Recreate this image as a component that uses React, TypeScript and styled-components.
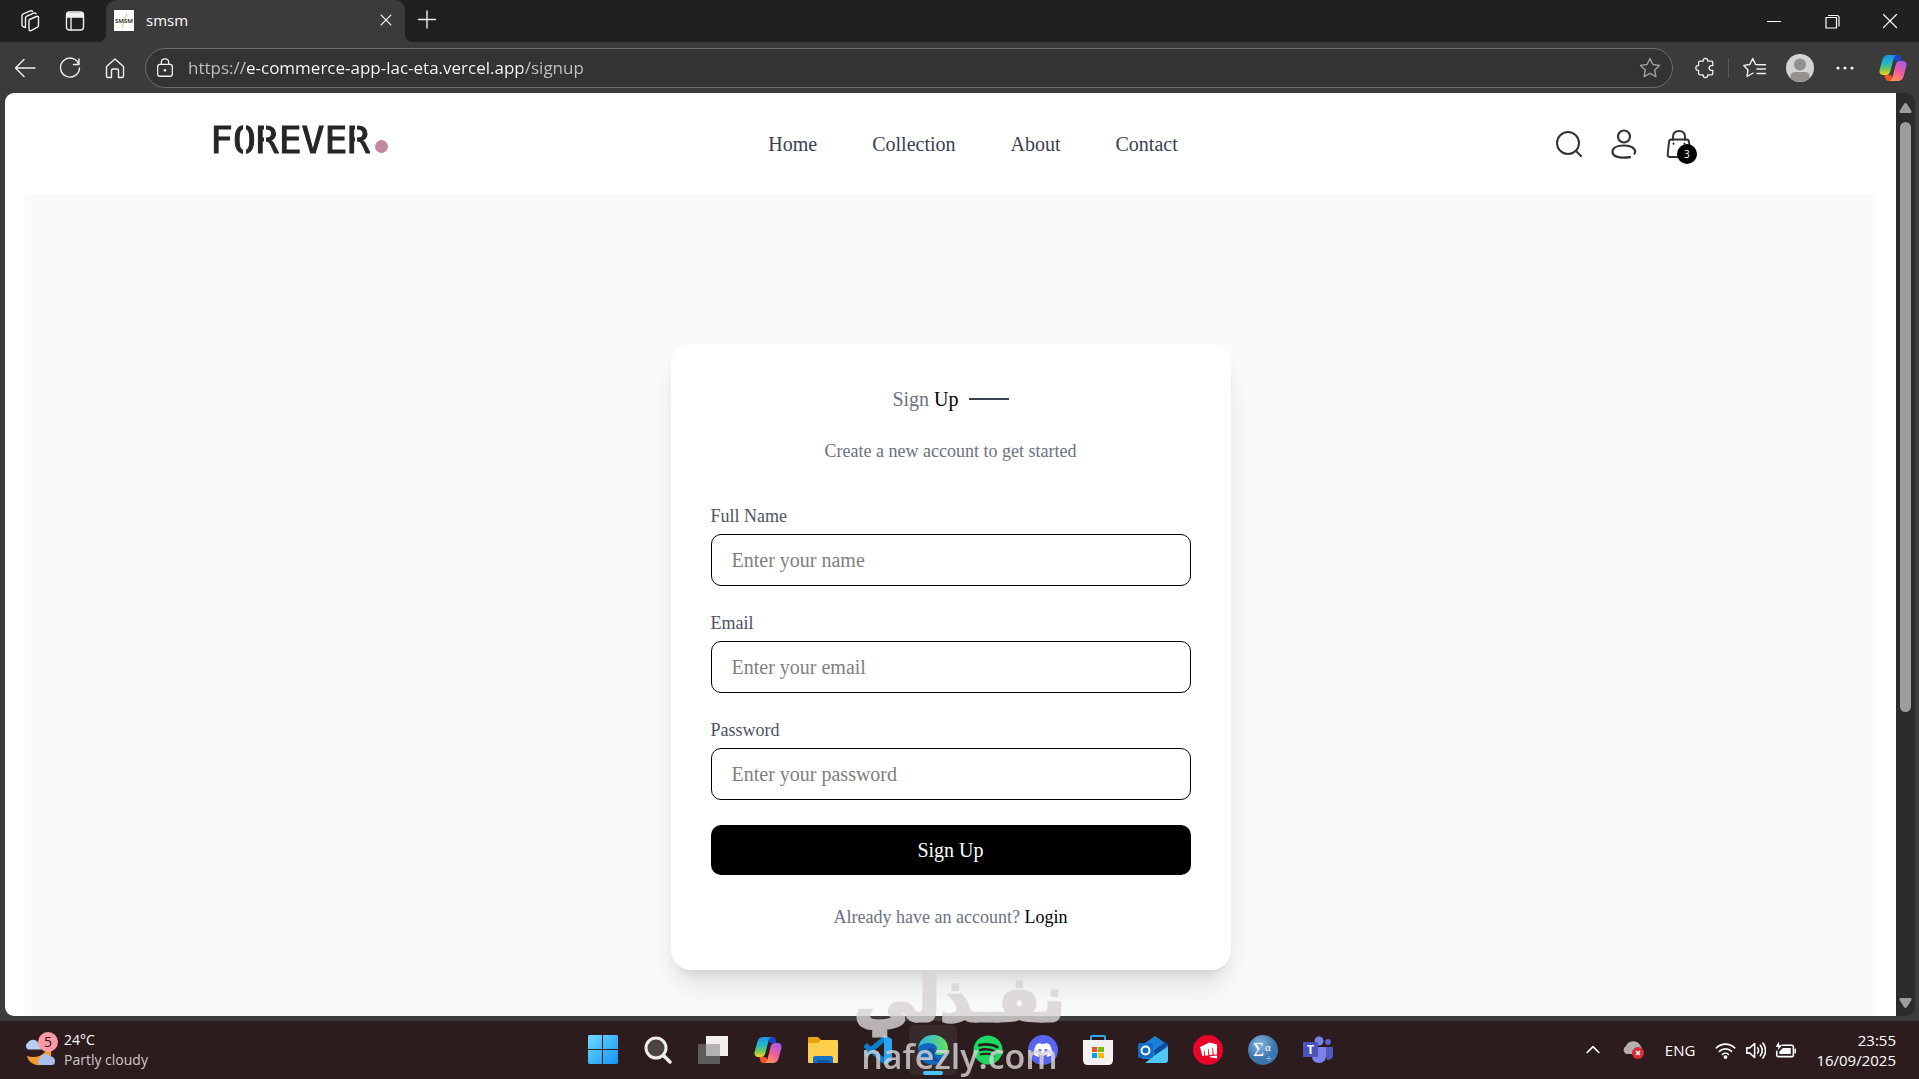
import React from 'react';
import styled, { createGlobalStyle } from 'styled-components';
import { FaDiscord, FaSpotify } from 'react-icons/fa';
import { SiRiotgames } from 'react-icons/si';

const serif = `'Liberation Serif', 'Times New Roman', serif`;
const ui = `'Open Sans', 'Noto Sans', sans-serif`;

const GlobalStyle = createGlobalStyle`
  *, *::before, *::after { box-sizing: border-box; }
  body { margin: 0; background: #3b3b3b; }
  button { border: 0; padding: 0; background: none; color: inherit; font: inherit; cursor: pointer; }
  a { color: inherit; text-decoration: none; }
  h1, p { margin: 0; font-weight: 400; }
  svg { display: block; }
`;

const Desktop = styled.div`
  display: flex;
  flex-direction: column;
  height: 100vh;
  overflow: hidden;
  font-family: ${ui};
  color: #fff;
`;

/* Browser window */
const TabStrip = styled.header`
  display: flex;
  height: 42px;
  background: #202020;
`;
const StripTools = styled.div`
  display: flex;
  align-items: center;
  gap: 9px;
  padding: 0 13px 0 12px;
`;
const IconButton = styled.button`
  display: grid;
  place-items: center;
  flex: none;
  width: 36px;
  height: 36px;
  color: #f0f0f0;
`;
const Tab = styled.div`
  position: relative;
  display: flex;
  align-items: center;
  gap: 12px;
  width: 299px;
  padding: 0 1px 2px 8px;
  border-radius: 10px 10px 0 0;
  background: #3b3b3b;
  font-size: 15px;
  &::before, &::after {
    content: '';
    position: absolute;
    bottom: 0;
    width: 8px;
    height: 8px;
  }
  &::before { left: -8px; background: radial-gradient(circle at 0 0, transparent 8px, #3b3b3b 8px); }
  &::after { right: -8px; background: radial-gradient(circle at 100% 0, transparent 8px, #3b3b3b 8px); }
`;
const TabTitle = styled.span`
  flex: 1;
`;
const NewTab = styled(IconButton)`
  height: 40px;
  margin: 0 auto 0 4px;
`;
const WindowButton = styled.button`
  display: grid;
  place-items: center;
  width: 58px;
  height: 42px;
`;

const Toolbar = styled.div`
  display: flex;
  align-items: center;
  height: 51px;
  padding: 0 8px 0 7px;
  background: #3b3b3b;
`;
const ToolGroup = styled.div`
  display: flex;
  align-items: center;
  gap: 9px;
`;
const AddressBar = styled.form`
  display: flex;
  align-items: center;
  flex: 1;
  height: 40px;
  margin: 0 14px 0 12px;
  padding: 0 4px 0 1px;
  border: 1px solid #6c6c6c;
  border-radius: 20px;
  background: #333;
`;
const AddressInput = styled.input`
  flex: 1;
  min-width: 0;
  height: 36px;
  padding: 0 0 0 5px;
  border: 0;
  outline: 0;
  background: linear-gradient(90deg, #c4c4c4 62px, #fff 62px 340px, #c4c4c4 340px) text;
  color: transparent;
  font-family: ${ui};
  font-size: 17px;
`;
const FavoriteButton = styled(IconButton)`
  color: #a0a0a0;
`;
const ToolDivider = styled.span`
  width: 1px;
  height: 20px;
  margin: 0 8px 0 5px;
  background: #5a5a5a;
`;
const CopilotButton = styled(IconButton)`
  margin-left: 12px;
`;

const Viewport = styled.div`
  display: flex;
  flex: 1;
  min-height: 0;
  padding: 0 4px 0 5px;
`;
const Page = styled.div`
  flex: 1;
  overflow: hidden;
  padding: 0 20px;
  border-radius: 9px 0 0 9px;
  background: #fff;
  font-family: ${serif};
`;
const Scrollbar = styled.div`
  display: flex;
  flex-direction: column;
  align-items: center;
  width: 19px;
  padding: 10px 0 8px;
  border-radius: 0 9px 9px 0;
  background: #2b2b2b;
`;
const Track = styled.div`
  flex: 1;
  margin: 9px 0;
`;
const Thumb = styled.div`
  width: 11px;
  height: 68%;
  border-radius: 6px;
  background: #9d9d9d;
`;

/* Shop site */
const SiteHeader = styled.div`
  display: flex;
  align-items: center;
  justify-content: space-between;
  height: 101px;
  padding: 0 10%;
`;
const Brand = styled.a`
  display: flex;
  align-items: baseline;
  width: 180px;
  padding-bottom: 7px;
  color: #262626;
  font-family: 'DejaVu Sans Mono', monospace;
  font-size: 38px;
  line-height: 46px;
`;
/* Thin vertical cuts give the wordmark its stencil look */
const BrandName = styled.span`
  -webkit-text-stroke: 1px #262626;
  mask-image: linear-gradient(
    90deg,
    #000 33px, transparent 33px 36px, #000 36px 54px, transparent 54px 56px,
    #000 56px 145px, transparent 145px 147px, #000 147px
  );
`;
const BrandDot = styled.span`
  flex: none;
  width: 13px;
  height: 13px;
  margin-left: 5px;
  border-radius: 50%;
  background: #c586a0;
`;
const SiteNav = styled.nav`
  display: flex;
  gap: 55px;
  padding-top: 1px;
  color: #374151;
  font-size: 20px;
  line-height: 30px;
`;
const SiteActions = styled.div`
  display: flex;
  gap: 30px;
`;
const SiteButton = styled.button`
  position: relative;
  display: grid;
  place-items: center;
  width: 25px;
  height: 30px;
  color: #333;
`;
const CartCount = styled.span`
  position: absolute;
  right: -6px;
  bottom: -5px;
  width: 20px;
  height: 20px;
  border-radius: 50%;
  background: #000;
  color: #fff;
  font: 10px/20px ${ui};
  text-align: center;
`;
const SignupSection = styled.main`
  display: flex;
  justify-content: center;
  align-items: flex-start;
  min-height: 100vh;
  padding: 150px 20px;
  background: #f9fafb;
`;
const Card = styled.section`
  width: 100%;
  max-width: 560px;
  padding: 40px;
  border-radius: 20px;
  background: #fff;
  box-shadow: 0 20px 30px -5px rgba(0, 0, 0, 0.1), 0 8px 12px -6px rgba(0, 0, 0, 0.12);
  text-align: center;
`;
const CardTitle = styled.h1`
  display: flex;
  align-items: center;
  justify-content: center;
  gap: 10px;
  color: #6b7280;
  font-size: 20px;
  line-height: 30px;
  b { color: #000; font-weight: 400; }
  &::after { content: ''; width: 40px; height: 2px; background: #374151; }
`;
const Note = styled.p<{ $top: number }>`
  margin-top: ${(p) => p.$top}px;
  color: #6b7280;
  font-size: 18px;
  line-height: 25px;
  a { color: #000; }
`;
const Form = styled.form`
  display: grid;
  gap: 25px;
  margin-top: 40px;
`;
const Field = styled.div`
  display: grid;
  gap: 5px;
  text-align: left;
`;
const FieldLabel = styled.label`
  color: #4b5563;
  font-size: 18px;
  line-height: 25px;
`;
const FieldInput = styled.input`
  width: 100%;
  height: 52px;
  padding: 0 20px;
  border: 1px solid #000;
  border-radius: 10px;
  background: #fff;
  font-family: ${serif};
  font-size: 20px;
  &::placeholder { color: #808080; }
`;
const Submit = styled.button`
  height: 50px;
  border-radius: 10px;
  background: #000;
  color: #fff;
  font-size: 20px;
`;

/* Desktop taskbar */
const Taskbar = styled.footer`
  display: grid;
  grid-template-columns: 1fr auto 1fr;
  align-items: center;
  height: 58px;
  margin-top: 5px;
  background: #2c1c1d;
  font-size: 15px;
  line-height: 20px;
`;
const Weather = styled.button`
  display: flex;
  align-items: center;
  gap: 6px;
  justify-self: start;
  padding-left: 24px;
  font-size: 14px;
  text-align: left;
  span { display: block; color: #d0c8c8; }
  span:first-child { color: #fff; }
`;
const Apps = styled.div`
  display: flex;
  gap: 7px;
  padding-left: 2px;
`;
const AppButton = styled.button<{ $active?: boolean }>`
  position: relative;
  display: grid;
  place-items: center;
  width: 48px;
  height: 50px;
  border-radius: 5px;
  background: ${(p) => (p.$active ? '#382a2b' : 'transparent')};
  &::after {
    content: '';
    display: ${(p) => (p.$active ? 'block' : 'none')};
    position: absolute;
    left: 14px;
    bottom: 0;
    width: 20px;
    height: 4px;
    border-radius: 2px;
    background: #4cc2ff;
  }
`;
const RoundLogo = styled.span<{ $bg: string }>`
  display: grid;
  place-items: center;
  width: 30px;
  height: 30px;
  border-radius: 50%;
  background: ${(p) => p.$bg};
  color: #fff;
`;
const Tray = styled.div`
  display: flex;
  align-items: center;
  justify-self: end;
  gap: 20px;
  padding-right: 23px;
`;
const QuickSettings = styled.button`
  display: flex;
  gap: 9px;
`;
const Clock = styled.button`
  text-align: right;
  span { display: block; }
`;

const Watermark = styled.div`
  position: fixed;
  left: 50%;
  bottom: 0;
  transform: translateX(-50%);
  display: flex;
  flex-direction: column;
  align-items: center;
  color: #d8d4d4;
  opacity: 0.82;
  pointer-events: none;
`;
const WatermarkArabic = styled.span`
  font-family: 'DejaVu Sans', sans-serif;
  font-size: 62px;
  font-weight: 700;
  line-height: 66px;
  -webkit-text-stroke: 3px #d8d4d4;
`;
const WatermarkLatin = styled.span`
  font-family: 'Open Sans', sans-serif;
  font-size: 34px;
  font-weight: 600;
  line-height: 46px;
`;

type IconProps = { size?: number; width?: number; children: React.ReactNode };
const Line = ({ size = 24, width = 1.4, children }: IconProps) => (
  <svg width={size} height={size} viewBox="0 0 24 24" fill="none" stroke="currentColor" strokeWidth={width} strokeLinecap="round" strokeLinejoin="round" aria-hidden="true">
    {children}
  </svg>
);

const CopilotLogo = ({ id }: { id: string }) => (
  <svg width="28" height="28" viewBox="0 0 28 28" aria-hidden="true">
    <defs>
      <linearGradient id={`${id}a`} x1="0" y1="0" x2="0" y2="1">
        <stop offset="0" stopColor="#1b8fe8" /><stop offset=".4" stopColor="#22b8c9" /><stop offset=".7" stopColor="#6cc75a" /><stop offset="1" stopColor="#f5d51c" />
      </linearGradient>
      <linearGradient id={`${id}b`} x1=".8" y1="0" x2=".2" y2="1">
        <stop offset="0" stopColor="#a35be8" /><stop offset=".5" stopColor="#ee5c9c" /><stop offset="1" stopColor="#ff9b4a" />
      </linearGradient>
    </defs>
    <path d="M15 1h3.500c2 0 2.800 1.200 3.300 3l.9 3H17l-2-1z" fill="#1746c8" />
    <path d="M13 27H9.500c-2 0-2.800-1.200-3.300-3l-.9-3H11l2 1z" fill="#f0532d" />
    <path d="M9 1h9c-1.900 0-2.800 1.500-3.400 3.400L11.400 17c-.7 2.400-2 4-4.400 4H4.300C1.200 21-.2 18.500.7 15.400L3.500 5.500C4.400 2.600 6 1 9 1z" fill={`url(#${id}a)`} />
    <path d="M19 27h-9c1.900 0 2.800-1.500 3.400-3.400L16.600 11c.7-2.400 2-4 4.400-4h2.700c3.100 0 4.500 2.500 3.600 5.600l-2.800 9.900C23.600 25.400 22 27 19 27z" fill={`url(#${id}b)`} />
  </svg>
);

const Favicon = () => (
  <svg width="20" height="21" viewBox="0 0 20 21" aria-hidden="true">
    <path fill="#fff" d="M0 0h20v21H0z" />
    <path d="M13 3 8 18" stroke="#d8c98a" />
    <text x="10" y="13" fontSize="6" fontWeight="700" textAnchor="middle" fill="#444" fontFamily="Open Sans, sans-serif">SMSM</text>
  </svg>
);

const WeatherIcon = () => (
  <svg width="34" height="36" viewBox="0 0 34 36" aria-hidden="true">
    <path d="M3 24a12 11 0 0 0 24-4c0-3-1-6-3-8 0 8-9 16-21 12z" fill="#f09a2c" />
    <path d="M4 17.500a4 4 0 0 1 0-7 6 6 0 0 1 10 0q3 1 3 7z" fill="#b9cdf3" />
    <path d="M16 33a4 4 0 0 1 0-7 6 6 0 0 1 10-2q5 1 5 5 0 4-3 4z" fill="#a9c0ef" />
    <circle cx="24" cy="10" r="10" fill="#fd9aa5" />
    <text x="24" y="15" fontSize="14" textAnchor="middle" fill="#301517" fontFamily="Open Sans, sans-serif">5</text>
  </svg>
);

const apps: { name: string; active?: boolean; icon: React.ReactNode }[] = [
  { name: 'Start', icon: (
    <svg width="30" height="30" viewBox="0 0 30 30"><defs><linearGradient id="win" x1="0" y1="0" x2="1" y2="1"><stop stopColor="#6fdcff" /><stop offset="1" stopColor="#1392f5" /></linearGradient></defs>
      <path fill="url(#win)" d="M1 0h13v14H0V1zM15 0h14l1 1v13H15zM0 15h14v14H1l-1-1zM15 15h15v13l-1 1H15z" /></svg>
  ) },
  { name: 'Search', icon: (
    <svg width="30" height="30" viewBox="0 0 30 30"><circle cx="13" cy="13" r="10" fill="#4c4344" stroke="#eee" strokeWidth="3" /><path d="m21 21 6 6" stroke="#eee" strokeWidth="3.500" strokeLinecap="round" /></svg>
  ) },
  { name: 'Task view', icon: (
    <svg width="30" height="30" viewBox="0 0 30 30"><path fill="#f1eff0" d="M8 1h22v20H8z" /><path fill="#666" d="M0 9h22v20H0z" opacity=".85" /><path fill="#b5b2b3" d="M8 9h14v12H8z" /></svg>
  ) },
  { name: 'Copilot', icon: <CopilotLogo id="tb" /> },
  { name: 'File Explorer', icon: (
    <svg width="30" height="30" viewBox="0 0 30 30"><path fill="#e5a50f" d="M0 3q0-1 1-1h9l3 3h5v6H0z" /><path fill="#fecf4c" d="M0 8h10l3-3h16q1 0 1 1v21q0 1-1 1H1q-1 0-1-1z" /><path fill="#1272c4" d="M5 28v-5q0-2 2-2h16q2 0 2 2v5z" /><path fill="#0c569e" d="M9 25h12v3H9z" /></svg>
  ) },
  { name: 'Visual Studio Code', icon: (
    <svg width="30" height="30" viewBox="0 0 30 30"><path d="M2 10 22 27M2 20 22 3" stroke="#0a7fd0" strokeWidth="5" /><path fill="#2aa4f0" d="m21 0 8 4v22l-8 4z" /></svg>
  ) },
  { name: 'Microsoft Edge', active: true, icon: (
    <svg width="30" height="30" viewBox="0 0 30 30"><defs><linearGradient id="edge"><stop stopColor="#2ab5e8" /><stop offset="1" stopColor="#68df5c" /></linearGradient></defs>
      <circle cx="15" cy="15" r="15" fill="#1069bd" />
      <path fill="url(#edge)" d="M0 14C1 5 7 0 15 0c9 0 15 6 15 13 0 5-4 7-8 7-4 0-5-1-5-2s2-1 2-4-3-6-8-6S1 10 0 14z" />
      <path fill="#154e9c" d="M10 15c-2 7 4 12 10 12 3 0 5-1 7-2-8 1-13-4-10-9-2-4-6-4-7-1z" /></svg>
  ) },
  { name: 'Spotify', icon: <FaSpotify size={30} color="#1ed760" /> },
  { name: 'Discord', icon: <RoundLogo $bg="#5865f2"><FaDiscord size={20} /></RoundLogo> },
  { name: 'Microsoft Store', icon: (
    <svg width="30" height="30" viewBox="0 0 30 30"><path d="M8 6V2q0-1 1-1h12q1 0 1 1v4" fill="none" stroke="#33a7ec" strokeWidth="2" /><path fill="#f3f1f1" d="M0 5h30v20q0 5-5 5H5q-5 0-5-5z" /><path fill="#f25022" d="M9 12h5v5H9z" /><path fill="#7fba00" d="M15 12h6v5h-6z" /><path fill="#00a4ef" d="M9 18h5v5H9z" /><path fill="#ffb900" d="M15 18h6v5h-6z" /></svg>
  ) },
  { name: 'Outlook', icon: (
    <svg width="30" height="28" viewBox="0 0 30 28"><path fill="#1a82d8" d="M4 9 17 0l13 9v14H4z" /><path fill="#0e4a99" d="m16 14 12-8 2 3-13 11z" /><path fill="#51c6f3" d="M30 11v13q0 3-3 3H7l13-10z" /><rect y="7" width="15" height="15" rx="2" fill="#0f6cbf" /><circle cx="7.500" cy="14.500" r="4" fill="none" stroke="#fff" strokeWidth="2" /></svg>
  ) },
  { name: 'Riot Client', icon: <RoundLogo $bg="#e90429"><SiRiotgames size={17} /></RoundLogo> },
  { name: 'Math Input', icon: (
    <svg width="30" height="30" viewBox="0 0 30 30"><defs><radialGradient id="math" cx=".4" cy=".3"><stop stopColor="#86b4dc" /><stop offset="1" stopColor="#3d75ad" /></radialGradient></defs>
      <circle cx="15" cy="15" r="15" fill="url(#math)" /><g fill="#fff" fontFamily="Liberation Serif, serif"><text x="5" y="21" fontSize="19">Σ</text><text x="17" y="16" fontSize="11">α</text><text x="18" y="27" fontSize="10">÷</text></g></svg>
  ) },
  { name: 'Microsoft Teams', icon: (
    <svg width="30" height="28" viewBox="0 0 30 28"><circle cx="25" cy="6" r="3" fill="#5b62c8" /><path fill="#5059c0" d="M20 11h10v8q0 5-6 5z" /><circle cx="16" cy="5" r="4.500" fill="#7b83eb" /><path fill="#7b83eb" d="M9 11h14v9q0 7-7 7t-7-7z" /><rect y="6" width="15" height="15" rx="1" fill="#4b53bc" /><text x="7.500" y="18" fontSize="12" fontWeight="700" textAnchor="middle" fill="#fff" fontFamily="Open Sans, sans-serif">T</text></svg>
  ) },
];

const fields = [
  { id: 'name', label: 'Full Name', type: 'text', hint: 'Enter your name' },
  { id: 'email', label: 'Email', type: 'email', hint: 'Enter your email' },
  { id: 'password', label: 'Password', type: 'password', hint: 'Enter your password' },
];

const links = ['Home', 'Collection', 'About', 'Contact'];

function BrowserChrome() {
  return (
    <>
      <TabStrip>
        <StripTools>
          <IconButton aria-label="Workspaces">
            <Line><path d="M11.500 10.500 18.500 7.500q2-.7 2 1.200v7.600q0 1.200-1 1.800l-6 3.300q-2.500 1-2.500-1.200v-8.500q0-.9.500-1.200zM7.500 18.500v-9.500q0-1.300 1.300-1.900l7-3q1.700-.6 2.200.7M4 16V6.800q0-1.300 1.300-1.900l7-3q1.700-.6 2.200.7M7.500 18.500Q4 18 4 16" /></Line>
          </IconButton>
          <IconButton aria-label="Tab actions">
            <Line><rect x="3.500" y="3" width="17" height="18" rx="3" /><path d="M4 4.500h16V8H4z" fill="currentColor" /><path d="M8 8v13" /></Line>
          </IconButton>
        </StripTools>
        <Tab>
          <Favicon />
          <TabTitle>smsm</TabTitle>
          <IconButton aria-label="Close tab"><Line size={18} width={1.8}><path d="m5.500 5.500 13 13M18.500 5.500l-13 13" /></Line></IconButton>
        </Tab>
        <NewTab aria-label="New tab"><Line><path d="M12 3v17M3.500 11.500h17" /></Line></NewTab>
        <WindowButton aria-label="Minimize"><Line width={1.2}><path d="M5.500 12.500h13" /></Line></WindowButton>
        <WindowButton aria-label="Restore"><Line width={1.2}><path d="M6 8.500h10.500V19H6zM8.500 6.500h8.500q2 0 2 2V17" /></Line></WindowButton>
        <WindowButton aria-label="Close"><Line width={1.2}><path d="m5.500 5.500 13 13M18.500 5.500l-13 13" /></Line></WindowButton>
      </TabStrip>
      <Toolbar>
        <ToolGroup>
          <IconButton aria-label="Back"><Line><path d="M22 12H3M11 3.500 2.500 12l8.500 8.500" /></Line></IconButton>
          <IconButton aria-label="Reload"><Line><path d="M21 8.500A9.500 9.500 0 1 0 21.500 12M21 3v5.500h-5.500" /></Line></IconButton>
          <IconButton aria-label="Home page"><Line><path d="M3.500 10.500 12 3l8.500 7.500V20q0 1.500-1.500 1.500h-3.500v-7q0-1.500-1.500-1.500h-4q-1.500 0-1.500 1.500v7H5q-1.500 0-1.500-1.500z" /></Line></IconButton>
        </ToolGroup>
        <AddressBar onSubmit={(e) => e.preventDefault()}>
          <IconButton type="button" aria-label="Site information"><Line size={22}><rect x="4" y="8" width="16" height="13" rx="2.500" /><path d="M8 8V5.500q0-3.500 4-3.500t4 3.500V8" /><circle cx="12" cy="14.500" r=".8" fill="currentColor" /></Line></IconButton>
          <AddressInput aria-label="Address" defaultValue="https://e-commerce-app-lac-eta.vercel.app/signup" />
          <FavoriteButton type="button" aria-label="Add to favorites"><Line><path d="m12 2.500 2.900 6 6.600.9-4.800 4.600 1.200 6.600-5.900-3.200-5.900 3.200 1.200-6.600L2.500 9.400l6.600-.9z" /></Line></FavoriteButton>
        </AddressBar>
        <IconButton aria-label="Extensions"><Line size={22}><path d="M10 4.500V4a2.500 2.500 0 0 1 5 0v.5h4q1.500 0 1.500 1.500v3.500H19a2.500 2.500 0 0 0 0 5h1.500V18q0 1.500-1.500 1.500h-4v.5a2.500 2.500 0 0 1-5 0v-.5H6.500Q5 19.500 5 18v-3.500h-.5a2.500 2.500 0 0 1 0-5H5V6q0-1.500 1.500-1.500z" /></Line></IconButton>
        <ToolDivider />
        <ToolGroup>
          <IconButton aria-label="Favorites"><Line><path d="M7.500 18.500 4 20.500l1-6.600L.8 9.400l6-.9 2.900-6 2.900 6 9.900.2M14 13h8.500M14 17.500h8.500M10 17l-2.500 1.500" /></Line></IconButton>
          <IconButton aria-label="Profile">
            <svg width="28" height="28" viewBox="0 0 28 28"><circle cx="14" cy="14" r="14" fill="#d5d3d1" /><circle cx="14" cy="10.500" r="6" fill="#93908d" /><path fill="#93908d" d="M4.500 24Q4 18 9 18h10q5 0 4.500 6a14 14 0 0 1-19 0z" /></svg>
          </IconButton>
          <IconButton aria-label="Settings and more"><Line><g fill="currentColor" stroke="none"><circle cx="5" cy="12" r="1.600" /><circle cx="12" cy="12" r="1.600" /><circle cx="19" cy="12" r="1.600" /></g></Line></IconButton>
        </ToolGroup>
        <CopilotButton aria-label="Copilot"><CopilotLogo id="nav" /></CopilotButton>
      </Toolbar>
    </>
  );
}

function SignupPage() {
  return (
    <Page>
      <SiteHeader>
        <Brand href="#"><BrandName>FOREVER</BrandName><BrandDot /></Brand>
        <SiteNav>{links.map((l) => <a key={l} href="#">{l}</a>)}</SiteNav>
        <SiteActions>
          <SiteButton aria-label="Search products">
            <svg width="26" height="26" viewBox="0 0 26 26" fill="none" stroke="currentColor" strokeWidth="2" strokeLinecap="round"><circle cx="12" cy="12" r="11" /><path d="m20 20 5 5" /></svg>
          </SiteButton>
          <SiteButton aria-label="Account">
            <svg width="26" height="30" viewBox="0 0 26 30" fill="none" stroke="currentColor" strokeWidth="2.200" strokeLinecap="round"><circle cx="13" cy="7.500" r="6" /><path d="M23.500 24.500c2-3-1-8-10.500-8-8 0-11.500 3-11.500 6.300C1.500 27 5 28.700 13 28.700q3.500 0 6-.5" /></svg>
          </SiteButton>
          <SiteButton aria-label="Cart">
            <svg width="26" height="30" viewBox="0 0 26 30" fill="none" stroke="currentColor" strokeWidth="2" strokeLinecap="round"><path d="M7 11V8q0-6 6-6t6 6v3" /><path d="M12 28H4q-2.500 0-2.300-2.500L3 13q.2-2.500 2.500-2.500h15q2.300 0 2.500 2.500l.8 7" /><path d="M7.500 14.500v.2M18.500 14.500v.2" /></svg>
            <CartCount>3</CartCount>
          </SiteButton>
        </SiteActions>
      </SiteHeader>
      <SignupSection>
        <Card>
          <CardTitle><span>Sign <b>Up</b></span></CardTitle>
          <Note $top={25}>Create a new account to get started</Note>
          <Form onSubmit={(e) => e.preventDefault()}>
            {fields.map((f) => (
              <Field key={f.id}>
                <FieldLabel htmlFor={f.id}>{f.label}</FieldLabel>
                <FieldInput id={f.id} type={f.type} placeholder={f.hint} />
              </Field>
            ))}
            <Submit type="submit">Sign Up</Submit>
          </Form>
          <Note $top={30}>Already have an account? <a href="#">Login</a></Note>
        </Card>
      </SignupSection>
    </Page>
  );
}

export default function App() {
  return (
    <Desktop>
      <GlobalStyle />
      <BrowserChrome />
      <Viewport>
        <SignupPage />
        <Scrollbar>
          <svg width="13" height="10" viewBox="0 0 13 10"><path d="M6.500 0q1 0 1.500 1l4.500 7q.5 2-1 2h-10q-1.500 0-1-2L5 1q.5-1 1.500-1z" fill="#9d9d9d" /></svg>
          <Track><Thumb /></Track>
          <svg width="13" height="10" viewBox="0 0 13 10"><path d="M6.500 10q1 0 1.500-1l4.500-7q.5-2-1-2h-10Q0 0 .5 2L5 9q.5 1 1.500 1z" fill="#9d9d9d" /></svg>
        </Scrollbar>
      </Viewport>
      <Taskbar>
        <Weather>
          <WeatherIcon />
          <div><span>24°C</span><span>Partly cloudy</span></div>
        </Weather>
        <Apps>
          {apps.map((a) => <AppButton key={a.name} aria-label={a.name} $active={a.active}>{a.icon}</AppButton>)}
        </Apps>
        <Tray>
          <button aria-label="Show hidden icons"><Line size={20} width={2}><path d="m5 15 7-7 7 7" /></Line></button>
          <button aria-label="Cloud sync error">
            <svg width="22" height="20" viewBox="0 0 22 20"><path d="M3 14a4.500 4.500 0 0 1 0-8 8 8 0 0 1 14-1q3 3 1 9z" fill="#b5b0b0" /><circle cx="15" cy="13" r="6" fill="#d92b35" /><path d="m13 11 4 4m0-4-4 4" stroke="#fff" strokeWidth="1.500" /></svg>
          </button>
          <button>ENG</button>
          <QuickSettings aria-label="Network, volume and battery">
            <Line size={21} width={1.8}><path d="M1.500 9a15 15 0 0 1 21 0M5 13a10 10 0 0 1 14 0M8.500 16.500a5 5 0 0 1 7 0" /><circle cx="12" cy="19.500" r="1.300" fill="currentColor" /></Line>
            <Line size={21} width={1.8}><path d="M2 9h3.500L11 4v16l-5.500-5H2zM14.500 9q2 3 0 6M17.500 6q4.500 6 0 12M20.500 3.500q6 8.500 0 17" /></Line>
            <Line size={21} width={1.8}><path d="M8 6h11q2 0 2 2v9q0 2-2 2H4q-2 0-2-2v-4M23.200 10.500v4" /><path d="M9 9h9v7H5v-3z" fill="currentColor" stroke="none" /><path d="M4 2 1 8h3l-1 4 5-6H5z" fill="currentColor" stroke="none" /></Line>
          </QuickSettings>
          <Clock><span>23:55</span><span>16/09/2025</span></Clock>
        </Tray>
      </Taskbar>
      <Watermark>
        <WatermarkArabic lang="ar">نفـذلي</WatermarkArabic>
        <WatermarkLatin>nafezly.com</WatermarkLatin>
      </Watermark>
    </Desktop>
  );
}
